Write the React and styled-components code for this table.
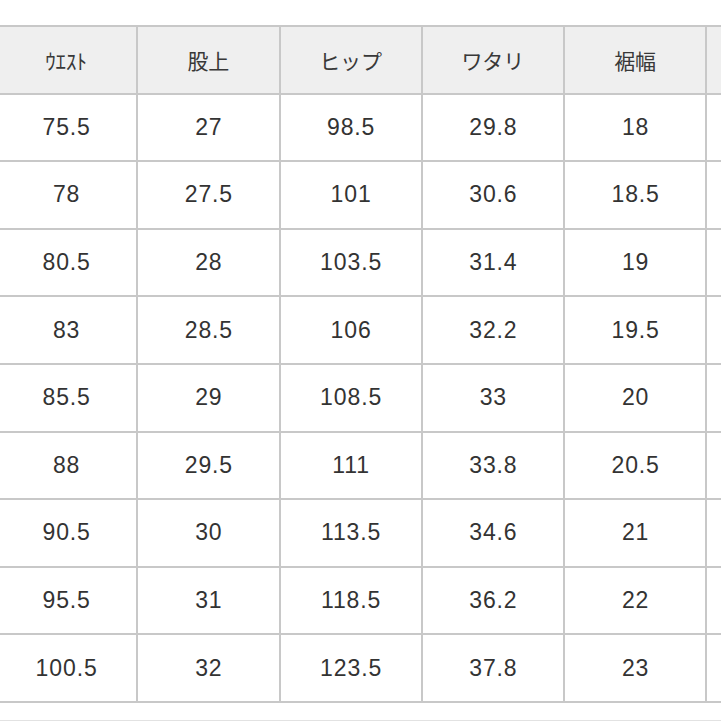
import React from 'react'
import styled, { createGlobalStyle } from 'styled-components'

const GlobalStyle = createGlobalStyle`
  html, body {
    margin: 0;
    padding: 0;
    background: #ffffff;
  }
`

const Page = styled.div`
  width: 721px;
  height: 721px;
  overflow: hidden;
  background: #ffffff;
  font-family: 'Liberation Sans', 'Noto Sans CJK JP', sans-serif;
  color: #333333;
`

const SizeTable = styled.table`
  margin-top: 25px;
  margin-left: -6px;
  border-collapse: collapse;
  table-layout: fixed;
  width: ${142.25 * 6}px;
`

const HeadCell = styled.th`
  width: 142.25px;
  height: 67.6px;
  padding: 0;
  box-sizing: border-box;
  border: 2px solid #c8c8c8;
  background: #efefef;
  font-family: 'Noto Sans CJK JP', sans-serif;
  font-weight: 400;
  font-size: 21px;
  color: #383838;
  text-align: center;
  vertical-align: middle;
`

const Cell = styled.td`
  height: 67.6px;
  padding: 0 0 0 1px;
  box-sizing: border-box;
  border: 2px solid #c8c8c8;
  font-size: 23px;
  letter-spacing: 0.9px;
  color: #333333;
  text-align: center;
  vertical-align: middle;
`

const Footer = styled.div`
  margin-top: 17px;
  border-top: 1px solid #e2e2e2;
  height: 20px;
`

const headers = ['ｳｴｽﾄ', '股上', 'ヒップ', 'ワタリ', '裾幅', '']

const rows = [
  ['75.5', '27', '98.5', '29.8', '18'],
  ['78', '27.5', '101', '30.6', '18.5'],
  ['80.5', '28', '103.5', '31.4', '19'],
  ['83', '28.5', '106', '32.2', '19.5'],
  ['85.5', '29', '108.5', '33', '20'],
  ['88', '29.5', '111', '33.8', '20.5'],
  ['90.5', '30', '113.5', '34.6', '21'],
  ['95.5', '31', '118.5', '36.2', '22'],
  ['100.5', '32', '123.5', '37.8', '23'],
]

export default function App() {
  return (
    <Page>
      <GlobalStyle />
      <SizeTable>
        <thead>
          <tr>
            {headers.map((h, i) => (
              <HeadCell key={i}>{h}</HeadCell>
            ))}
          </tr>
        </thead>
        <tbody>
          {rows.map((row, r) => (
            <tr key={r}>
              {row.map((v, c) => (
                <Cell key={c}>{v}</Cell>
              ))}
              <Cell />
            </tr>
          ))}
        </tbody>
      </SizeTable>
      <Footer />
    </Page>
  )
}
